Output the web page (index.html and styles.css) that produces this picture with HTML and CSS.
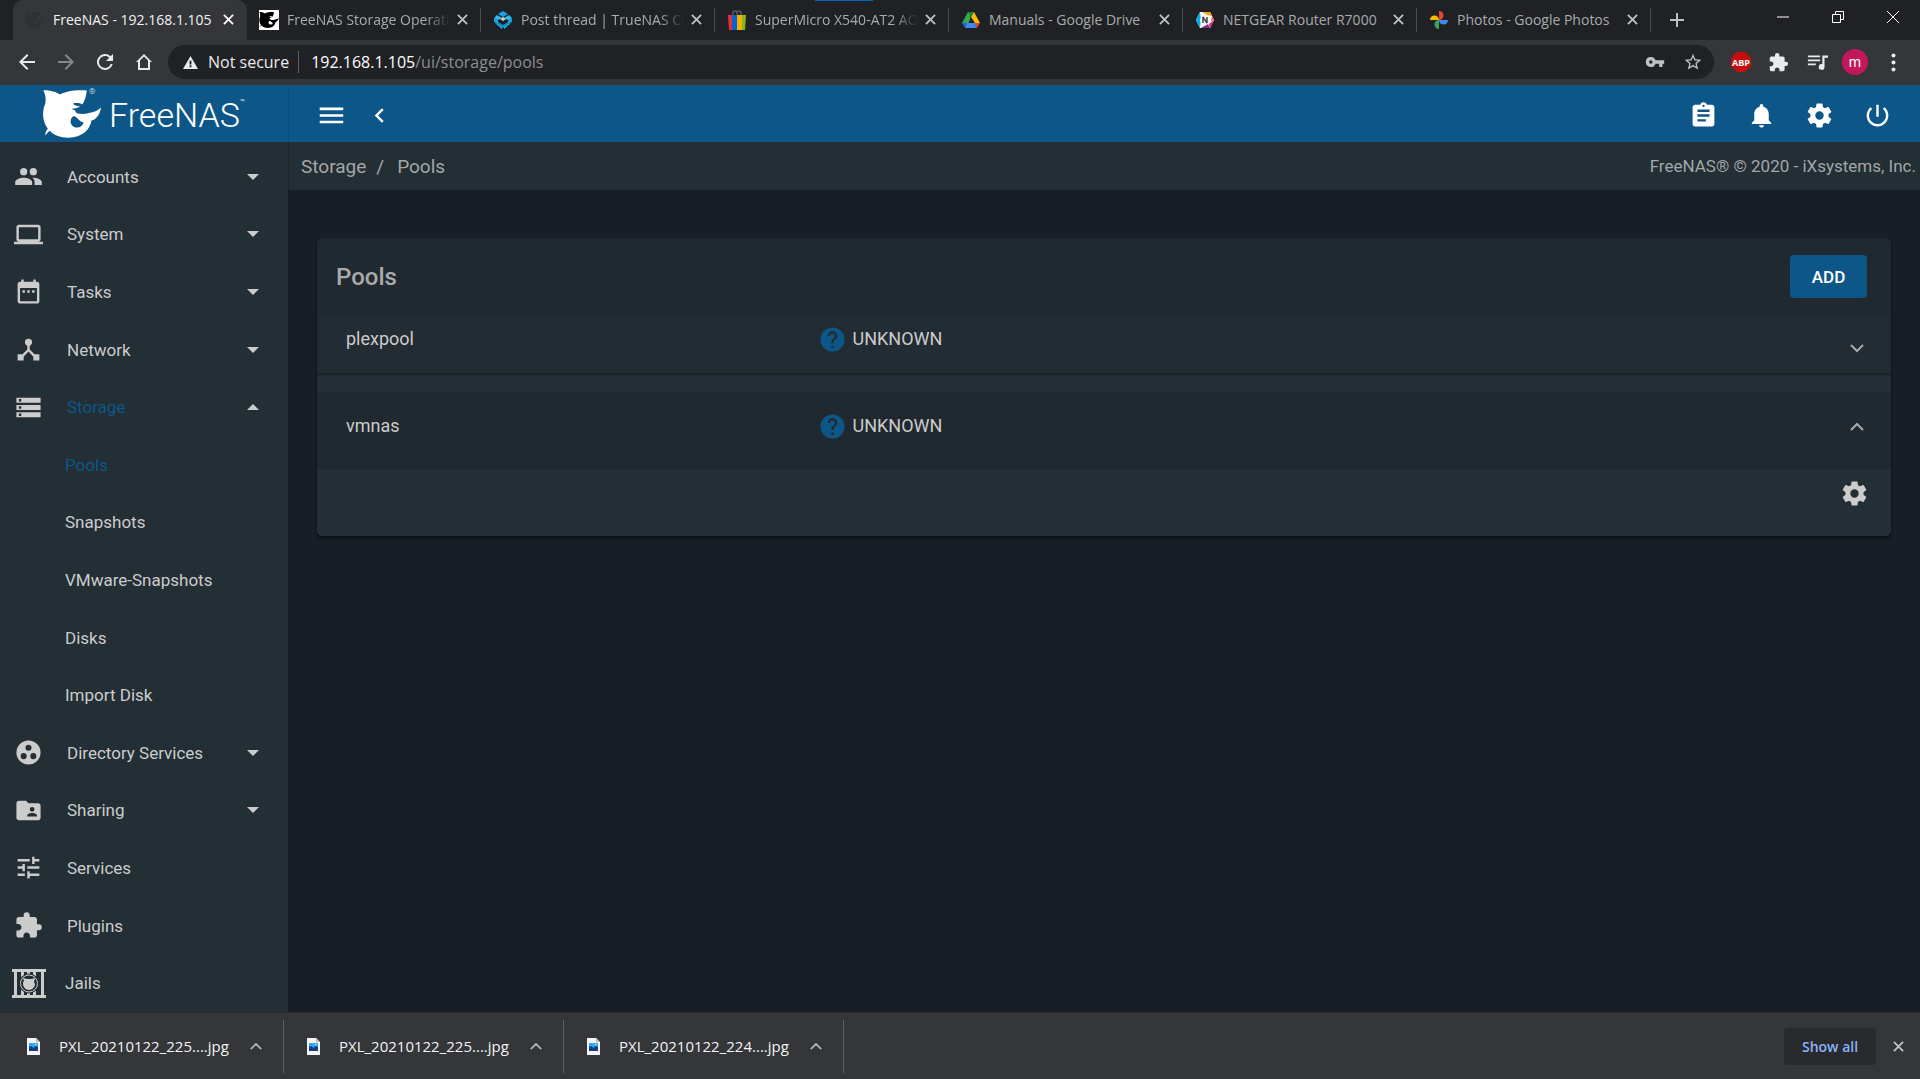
FILE: index.html
```html
<!DOCTYPE html>
<html lang="en">
<head>
    <meta charset="UTF-8">
    <title>FreeNAS - 192.168.1.105</title>
    <link rel="stylesheet" href="styles.css">
</head>
<body>
<svg class="sprite" aria-hidden="true">
    <symbol id="close" viewBox="0 0 12 12"><path d="M1 1l10 10M11 1L1 11" fill="none" stroke="currentColor" stroke-width="2"/></symbol>
    <symbol id="shark" viewBox="18 12 182 150"><path fill-rule="evenodd" d="M22 15C45 15 62 20 72 28C92 17 125 13 154 16C152 32 148 48 140 58C134 54 122 53 112 55C114 60 122 63 134 64C126 70 114 69 108 72L118 76C119 80 121 83 124 85C138 88 150 87 160 84C175 82 188 76 197 67C194 88 184 102 168 107C164 135 140 158 98 159C72 159 52 150 42 138C38 140 33 146 28 152C28 142 32 136 36 132C22 114 18 90 24 66C32 50 30 30 22 15ZM114 93C100 102 102 124 120 128C134 129 142 122 144 112C138 112 133 109 129 104C126 99 120 95 114 93Z"/></symbol>
    <symbol id="puzzle" viewBox="0 0 24 24"><path d="M20.5 11H19V7c0-1.1-.9-2-2-2h-4V3.500a2.500 2.500 0 0 0-5 0V5H4c-1.100 0-1.990.9-1.990 2v3.800H3.500c1.490 0 2.700 1.210 2.700 2.700s-1.210 2.700-2.700 2.700H2V20c0 1.100.9 2 2 2h3.800v-1.500c0-1.490 1.210-2.700 2.700-2.700s2.700 1.210 2.700 2.700V22H17c1.100 0 2-.9 2-2v-4h1.500a2.500 2.500 0 0 0 0-5z"/></symbol>
    <symbol id="gear" viewBox="0 0 24 24"><path d="M12 15.500A3.500 3.500 0 0 1 8.500 12 3.500 3.500 0 0 1 12 8.500a3.500 3.500 0 0 1 3.500 3.500 3.500 3.500 0 0 1-3.500 3.500m7.430-2.530c.04-.32.07-.64.07-.97s-.03-.66-.07-1l2.110-1.630c.19-.15.24-.42.12-.64l-2-3.460c-.12-.22-.39-.31-.61-.22l-2.490 1c-.52-.39-1.060-.73-1.690-.98l-.37-2.650A.506.506 0 0 0 14 2h-4c-.25 0-.46.18-.5.420l-.37 2.650c-.63.25-1.170.59-1.690.98l-2.490-1c-.22-.09-.49 0-.61.220l-2 3.460c-.13.220-.07.490.120.640L4.570 11c-.04.340-.07.670-.07 1s.03.650.07.970l-2.110 1.660c-.19.150-.25.420-.12.640l2 3.460c.12.220.390.300.610.220l2.490-1.010c.520.400 1.060.740 1.690.990l.370 2.650c.040.240.250.420.500.420h4c.250 0 .460-.180.500-.420l.370-2.650c.630-.260 1.170-.590 1.690-.990l2.490 1.010c.220.080.490 0 .610-.220l2-3.460c.120-.220.070-.490-.120-.640z"/></symbol>
    <symbol id="help" viewBox="0 0 24 24"><path d="M12 2a10 10 0 1 0 0 20 10 10 0 0 0 0-20zm1 17h-2v-2h2v2zm2.070-7.750l-.9.920C13.450 12.900 13 13.500 13 15h-2v-.5c0-1.100.450-2.100 1.170-2.830l1.240-1.260c.370-.360.590-.860.590-1.410a2 2 0 0 0-4 0H8a4 4 0 1 1 8 0c0 .880-.360 1.680-.930 2.250z"/></symbol>
    <symbol id="caret-down" viewBox="0 0 12 6"><path d="M0 0h12L6 6z"/></symbol>
    <symbol id="caret-up" viewBox="0 0 12 6"><path d="M0 6h12L6 0z"/></symbol>
    <symbol id="chevron-down" viewBox="0 0 14 9"><path d="M1 1l6 6 6-6" fill="none" stroke="currentColor" stroke-width="2"/></symbol>
    <symbol id="chevron-up" viewBox="0 0 14 9"><path d="M1 8l6-6 6 6" fill="none" stroke="currentColor" stroke-width="2"/></symbol>
    <symbol id="image-file" viewBox="0 0 13 17">
        <path fill="#f4f4f4" d="M0 0h9l4 4v13H0z"/>
        <path fill="#b9bcc0" d="M9 0l4 4H9z"/>
        <path fill="#31a8ee" d="M2 5h9v8H2z"/>
        <path fill="#123f87" d="M2 13V9l2-1 3 2 1-2 3 1v4z"/>
        <path fill="#fff" d="M8 6h1v1H8z"/>
    </symbol>
</svg>

<header class="browser">
    <div class="tab-strip">
        <div class="tab active">
            <svg class="favicon faint"><use href="#shark"/></svg>
            <span class="tab-title">FreeNAS - 192.168.1.105</span>
            <button class="tab-close" aria-label="Close tab"><svg><use href="#close"/></svg></button>
        </div>
        <div class="tab">
            <svg class="favicon white-box"><use href="#shark"/></svg>
            <span class="tab-title fade">FreeNAS Storage Operati</span>
            <button class="tab-close" aria-label="Close tab"><svg><use href="#close"/></svg></button>
        </div>
        <div class="tab">
            <svg class="favicon" viewBox="0 0 20 20">
                <path fill="#1ba1e2" d="M10 1l5 3-5 3-5-3zM1 8l4 2v4l-4-2zM19 8l-4 2v4l4-2z"/>
                <path fill="#31beec" d="M4 5l5 3-4 2-4-2zM16 5l-5 3 4 2 4-2zM2 13l3 1 4 3v2zM18 13l-3 1-4 3v2z"/>
                <path fill="#0095d5" d="M5 12l5 3 5-3v3l-5 3-5-3z"/>
                <path fill="#c7d0d5" d="M10 7l3 2-3 2-3-2z"/>
            </svg>
            <span class="tab-title fade">Post thread | TrueNAS Co</span>
            <button class="tab-close" aria-label="Close tab"><svg><use href="#close"/></svg></button>
        </div>
        <div class="tab">
            <svg class="favicon" viewBox="0 0 20 20">
                <path fill="none" stroke="#55585c" stroke-width="1.500" d="M6 7V3q0-2 2-2t2 2v4M10 7V3q0-2 2-2t2 2v4"/>
                <path fill="#e53238" d="M1 5h5v15H2z"/><path fill="#0064d2" d="M5 5h5v15H5z"/>
                <path fill="#f5af02" d="M10 5h5v15h-5z"/><path fill="#86b817" d="M15 5h4l-1 15h-3z"/>
            </svg>
            <span class="tab-title fade">SuperMicro X540-AT2 AO</span>
            <button class="tab-close" aria-label="Close tab"><svg><use href="#close"/></svg></button>
        </div>
        <div class="tab">
            <svg class="favicon" viewBox="0 0 20 20">
                <path fill="#34a853" d="M7 2h3l-1 8-4 7-4-4z"/><path fill="#188038" d="M7 2h6l-3 5z"/>
                <path fill="#fbbc04" d="M13 2l6 11h-5l-4-6z"/><path fill="#4285f4" d="M6 13h8l2 5H4z"/>
                <path fill="#ea4335" d="M14 13h5l-3 5z"/><path fill="#1967d2" d="M1 13h5l-2 5z"/>
            </svg>
            <span class="tab-title">Manuals - Google Drive</span>
            <button class="tab-close" aria-label="Close tab"><svg><use href="#close"/></svg></button>
        </div>
        <div class="tab">
            <svg class="favicon" viewBox="0 0 20 20">
                <path fill="#fff" d="M5 2h10l4 8-4 8H5l-4-8z"/>
                <path fill="#00aeef" d="M5 2L1 10l4 8 1-8z"/><path fill="#f9a11b" d="M7 2h8l2 4-5-1z"/>
                <path fill="#f15a29" d="M17 6l2 4-3 1z"/><path fill="#e6186d" d="M19 10l-4 8-1-4z"/><path fill="#7b2d8e" d="M15 18H6l7-4z"/>
                <circle cx="10" cy="10" r="5" fill="#f7f7f7"/>
                <path fill="none" stroke="#444" stroke-width="1.500" d="M8 13V7l4 6V7" stroke-linejoin="bevel"/>
            </svg>
            <span class="tab-title">NETGEAR Router R7000</span>
            <button class="tab-close" aria-label="Close tab"><svg><use href="#close"/></svg></button>
        </div>
        <div class="tab">
            <svg class="favicon" viewBox="0 0 20 20">
                <path fill="#ea4335" d="M10 1a4.500 4.500 0 0 1 0 9z"/><path fill="#4285f4" d="M19 10a4.500 4.500 0 0 1-9 0z"/>
                <path fill="#34a853" d="M10 19a4.500 4.500 0 0 1 0-9z"/><path fill="#fbbc04" d="M1 10a4.500 4.500 0 0 1 9 0z"/>
            </svg>
            <span class="tab-title">Photos - Google Photos</span>
            <button class="tab-close" aria-label="Close tab"><svg><use href="#close"/></svg></button>
        </div>
        <button class="new-tab" aria-label="New tab"><svg viewBox="0 0 14 14"><path d="M7 0v14M0 7h14"/></svg></button>
        <div class="window-buttons">
            <button aria-label="Minimize"><svg viewBox="0 0 14 14"><path d="M1 7h12"/></svg></button>
            <button aria-label="Restore"><svg viewBox="0 0 14 14"><path d="M1.500 4.500h8v8h-8zM4.500 4V1.500h8v8H10"/></svg></button>
            <button aria-label="Close"><svg viewBox="0 0 14 14"><path d="M1 1l12 12M13 1L1 13"/></svg></button>
        </div>
        <span class="window-accent"></span>
    </div>

    <div class="toolbar">
        <div class="nav-buttons">
            <button aria-label="Back"><svg viewBox="0 0 24 24"><path d="M20 11H7.800l5.600-5.600L12 4l-8 8 8 8 1.400-1.400L7.800 13H20z"/></svg></button>
            <button aria-label="Forward" class="dim"><svg viewBox="0 0 24 24"><path d="M12 4l-1.400 1.400 5.600 5.600H4v2h12.200l-5.600 5.600L12 20l8-8z"/></svg></button>
            <button aria-label="Reload"><svg viewBox="0 0 24 24"><path d="M17.650 6.350A8 8 0 1 0 19.730 14h-2.080A6 6 0 1 1 12 6c1.660 0 3.140.690 4.220 1.780L13 11h7V4z"/></svg></button>
            <button aria-label="Home"><svg viewBox="0 0 24 24"><path d="M12 4l8 8h-2v8H6v-8H4zM8 10.500V18h8v-7.500l-4-4z" fill-rule="evenodd"/></svg></button>
        </div>
        <div class="omnibox">
            <svg class="warning" viewBox="0 0 16 16"><path fill-rule="evenodd" d="M8 1l8 14H0zM7 6v4h2V6zM7 11v2h2v-2z"/></svg>
            <span class="secure">Not secure</span>
            <span class="url"><b>192.168.1.105</b>/ui/storage/pools</span>
            <button aria-label="Passwords"><svg viewBox="0 0 24 24"><path d="M12.650 10A6 6 0 0 0 1 12a6 6 0 0 0 11.650 2H17v4h4v-4h2v-4H12.650zM7 14a2 2 0 1 1 0-4 2 2 0 0 1 0 4z"/></svg></button>
            <button aria-label="Bookmark"><svg viewBox="0 0 24 24"><path d="M22 9.240l-7.190-.620L12 2 9.190 8.630 2 9.240l5.460 4.730L5.820 21 12 17.270 18.180 21l-1.630-7.030L22 9.240zM12 15.400l-3.760 2.270 1-4.280-3.320-2.880 4.380-.380L12 6.100l1.710 4.040 4.380.380-3.320 2.880 1 4.280L12 15.400z"/></svg></button>
        </div>
        <div class="extensions">
            <button class="abp">ABP</button>
            <button aria-label="Extensions"><svg><use href="#puzzle"/></svg></button>
            <button aria-label="Media"><svg viewBox="0 0 24 24"><path d="M1 4h14v2H1zM1 8.500h14v2H1zM1 13h9v2H1zM17 4h7v2.500h-4V17a3.300 3.300 0 1 1-2.500-3.200V4z"/></svg></button>
            <button class="avatar">m</button>
            <button aria-label="Menu"><svg viewBox="0 0 24 24"><circle cx="12" cy="4" r="2.300"/><circle cx="12" cy="12" r="2.300"/><circle cx="12" cy="20" r="2.300"/></svg></button>
        </div>
    </div>
</header>

<div class="app">
    <aside class="sidebar">
        <a class="logo" href="#">
            <svg><use href="#shark"/></svg><sup class="reg">®</sup>
            <span>FreeNAS</span><sup>™</sup>
        </a>
        <nav class="menu">
            <button class="menu-item">
                <svg class="icon" viewBox="0 0 24 24"><path d="M16 11a3 3 0 1 0 0-6 3 3 0 0 0 0 6zm-8 0a3 3 0 1 0 0-6 3 3 0 0 0 0 6zm0 2c-2.330 0-7 1.170-7 3.500V19h14v-2.500C15 14.170 10.330 13 8 13zm8 0c-.29 0-.62.020-.97.050 1.160.840 1.970 1.970 1.970 3.450V19h6v-2.500c0-2.330-4.670-3.500-7-3.500z"/></svg>
                <span>Accounts</span><svg class="caret"><use href="#caret-down"/></svg>
            </button>
            <button class="menu-item">
                <svg class="icon" viewBox="0 0 24 24"><path d="M20 18c1.100 0 2-.9 2-2V6c0-1.100-.9-2-2-2H4c-1.100 0-2 .9-2 2v10c0 1.100.9 2 2 2H0v2h24v-2h-4zM4 6h16v10H4V6z"/></svg>
                <span>System</span><svg class="caret"><use href="#caret-down"/></svg>
            </button>
            <button class="menu-item">
                <svg class="icon" viewBox="0 0 24 24"><path d="M9 11H7v2h2v-2zm4 0h-2v2h2v-2zm4 0h-2v2h2v-2zm2-7h-1V2h-2v2H8V2H6v2H5c-1.110 0-2 .9-2 2v14a2 2 0 0 0 2 2h14c1.100 0 2-.9 2-2V6c0-1.100-.9-2-2-2zm0 16H5V9h14v11z"/></svg>
                <span>Tasks</span><svg class="caret"><use href="#caret-down"/></svg>
            </button>
            <button class="menu-item">
                <svg class="icon" viewBox="0 0 24 24"><path d="M17 16l-4-4V8.820C14.160 8.400 15 7.300 15 6a3 3 0 0 0-6 0c0 1.300.840 2.400 2 2.820V12l-4 4H3v5h5v-3.050l4-4.200 4 4.200V21h5v-5h-4z"/></svg>
                <span>Network</span><svg class="caret"><use href="#caret-down"/></svg>
            </button>
            <button class="menu-item current">
                <svg class="icon" viewBox="0 0 24 24"><path d="M2 20h20v-4H2v4zm2-3h2v2H4v-2zM2 4v4h20V4H2zm4 3H4V5h2v2zm-4 7h20v-4H2v4zm2-3h2v2H4v-2z"/></svg>
                <span>Storage</span><svg class="caret"><use href="#caret-up"/></svg>
            </button>
            <a class="menu-item sub current" href="#">Pools</a>
            <a class="menu-item sub" href="#">Snapshots</a>
            <a class="menu-item sub" href="#">VMware-Snapshots</a>
            <a class="menu-item sub" href="#">Disks</a>
            <a class="menu-item sub" href="#">Import Disk</a>
            <button class="menu-item">
                <svg class="icon" viewBox="0 0 24 24"><path fill-rule="evenodd" d="M12 2a10 10 0 1 0 0 20 10 10 0 0 0 0-20zM8 17.500a2.500 2.500 0 1 1 0-5 2.500 2.500 0 0 1 0 5zM9.500 8a2.500 2.500 0 1 1 5 0 2.500 2.500 0 0 1-5 0zm6.500 9.500a2.500 2.500 0 1 1 0-5 2.500 2.500 0 0 1 0 5z"/></svg>
                <span>Directory Services</span><svg class="caret"><use href="#caret-down"/></svg>
            </button>
            <button class="menu-item">
                <svg class="icon" viewBox="0 0 24 24"><path d="M20 6h-8l-2-2H4c-1.100 0-1.990.9-1.990 2L2 18c0 1.100.9 2 2 2h16c1.100 0 2-.9 2-2V8c0-1.100-.9-2-2-2zm-5 3a2 2 0 1 1 0 4 2 2 0 0 1 0-4zm4 8h-8v-1c0-1.330 2.670-2 4-2s4 .670 4 2v1z"/></svg>
                <span>Sharing</span><svg class="caret"><use href="#caret-down"/></svg>
            </button>
            <a class="menu-item" href="#">
                <svg class="icon" viewBox="0 0 24 24"><path d="M3 17v2h6v-2H3zM3 5v2h10V5H3zm10 16v-2h8v-2h-8v-2h-2v6h2zM7 9v2H3v2h4v2h2V9H7zm14 4v-2H11v2h10zm-6-4h2V7h4V5h-4V3h-2v6z"/></svg>
                <span>Services</span>
            </a>
            <a class="menu-item" href="#">
                <svg class="icon"><use href="#puzzle"/></svg>
                <span>Plugins</span>
            </a>
            <a class="menu-item jails" href="#">
                <svg class="icon wide" viewBox="0 0 34 29">
                    <path d="M0 0h34v3H0zM0 26h34v3H0zM2 3h3v23H2zM9 3h3v23H9zM15 3h3v23h-3zM21 3h3v23h-3zM29 3h3v23h-3z"/>
                    <circle cx="17" cy="14.500" r="10" fill="#232e35"/>
                    <circle cx="17" cy="14.500" r="8.500" fill="none" stroke="currentColor"/>
                    <path d="M11 9l4 1h4l4-1-1 4 1 2c0 3-3 6-6 6s-6-3-6-6c0-1 0-2 1-3z"/>
                </svg>
                <span>Jails</span>
            </a>
        </nav>
    </aside>

    <div class="content">
        <div class="topbar">
            <button aria-label="Toggle menu"><svg viewBox="0 0 24 24"><path d="M3 18h18v-2H3v2zm0-5h18v-2H3v2zm0-7v2h18V6H3z" transform="translate(-1 -1) scale(1.080)"/></svg></button>
            <button aria-label="Collapse menu"><svg viewBox="0 0 24 24"><path d="M15.410 7.410L14 6l-6 6 6 6 1.410-1.410L10.830 12z"/></svg></button>
            <div class="topbar-actions">
                <button aria-label="Task manager"><svg viewBox="0 0 24 24"><path fill-rule="evenodd" d="M19 3h-4.180a3 3 0 0 0-5.640 0H5c-1.100 0-2 .9-2 2v14c0 1.100.9 2 2 2h14c1.100 0 2-.9 2-2V5c0-1.100-.9-2-2-2zm-7 0a1 1 0 1 1 0 2 1 1 0 0 1 0-2zm2 14H7v-2h7v2zm3-4H7v-2h10v2zm0-4H7V7h10v2z"/></svg></button>
                <button aria-label="Notifications"><svg viewBox="0 0 24 24"><path d="M12 22c1.100 0 2-.9 2-2h-4a2 2 0 0 0 2 2zm6-6v-5c0-3.070-1.640-5.640-4.500-6.320V4a1.500 1.500 0 0 0-3 0v.680C7.630 5.360 6 7.920 6 11v5l-2 2v1h16v-1l-2-2z"/></svg></button>
                <button aria-label="Settings"><svg><use href="#gear"/></svg></button>
                <button aria-label="Power"><svg viewBox="0 0 24 24"><path d="M13 3h-2v10h2V3zm4.830 2.170l-1.420 1.420A6.920 6.920 0 0 1 19 12a7 7 0 1 1-11.420-5.420L6.170 5.170A9 9 0 1 0 21 12a8.940 8.940 0 0 0-3.170-6.830z"/></svg></button>
            </div>
        </div>
        <div class="breadcrumb">
            <a href="#">Storage</a><span class="slash">/</span><a href="#">Pools</a>
            <span class="copyright">FreeNAS® © 2020 - iXsystems, Inc.</span>
        </div>
        <main>
            <section class="card">
                <div class="card-header">
                    <h1>Pools</h1>
                    <button class="add">ADD</button>
                </div>
                <div class="pool closed">
                    <span class="pool-name">plexpool</span>
                    <span class="status"><svg><use href="#help"/></svg>UNKNOWN</span>
                    <button aria-label="Expand plexpool"><svg><use href="#chevron-down"/></svg></button>
                </div>
                <div class="pool open">
                    <span class="pool-name">vmnas</span>
                    <span class="status"><svg><use href="#help"/></svg>UNKNOWN</span>
                    <button aria-label="Collapse vmnas"><svg><use href="#chevron-up"/></svg></button>
                </div>
                <div class="pool-body">
                    <button aria-label="Pool operations"><svg><use href="#gear"/></svg></button>
                </div>
            </section>
        </main>
    </div>
</div>

<footer class="downloads">
    <div class="download">
        <svg class="file"><use href="#image-file"/></svg>
        <span>PXL_20210122_225....jpg</span>
        <button aria-label="Options"><svg><use href="#chevron-up"/></svg></button>
    </div>
    <div class="download">
        <svg class="file"><use href="#image-file"/></svg>
        <span>PXL_20210122_225....jpg</span>
        <button aria-label="Options"><svg><use href="#chevron-up"/></svg></button>
    </div>
    <div class="download">
        <svg class="file"><use href="#image-file"/></svg>
        <span>PXL_20210122_224....jpg</span>
        <button aria-label="Options"><svg><use href="#chevron-up"/></svg></button>
    </div>
    <button class="show-all">Show all</button>
    <button class="close-bar" aria-label="Close downloads"><svg><use href="#close"/></svg></button>
</footer>
</body>
</html>
```
FILE: styles.css
```css
* {
    box-sizing: border-box;
}

html, body {
    margin: 0;
    height: 100%;
}

body {
    display: flex;
    flex-direction: column;
    overflow: hidden;
    background: #171e26;
    color: #cccccc;
    font-family: Roboto, sans-serif;
    font-size: 17px;
}

button {
    display: flex;
    align-items: center;
    justify-content: center;
    flex-shrink: 0;
    margin: 0;
    padding: 0;
    border: none;
    background: none;
    color: inherit;
    font: inherit;
}

a {
    color: inherit;
    text-decoration: none;
}

svg {
    display: block;
    flex-shrink: 0;
    fill: currentColor;
}

.sprite {
    position: absolute;
    width: 0;
    height: 0;
}

/* browser */
.browser, .downloads {
    font-family: "Open Sans", sans-serif;
    flex-shrink: 0;
}

.tab-strip {
    position: relative;
    display: flex;
    height: 40px;
    padding-left: 13px;
    background: #202124;
    color: #a7abb0;
    font-size: 14px;
}

.tab {
    display: flex;
    align-items: center;
    width: 234px;
    padding: 0 7px 1px 12px;
    position: relative;
}

.tab:not(.active)::after {
    content: "";
    position: absolute;
    right: 0;
    top: 8px;
    width: 1px;
    height: 24px;
    background: #4b4d51;
}

.tab.active {
    border-radius: 10px 10px 0 0;
    background: #35363a;
    color: #f1f3f4;
}

.favicon {
    width: 20px;
    height: 20px;
    margin-right: 8px;
}

.favicon.faint {
    color: #303134;
}

.favicon.white-box {
    background: #ffffff;
    color: #000000;
}

.tab-title {
    flex: 1;
    overflow: hidden;
    white-space: nowrap;
}

.tab-title.fade {
    -webkit-mask-image: linear-gradient(to right, #000 85%, transparent);
    mask-image: linear-gradient(to right, #000 85%, transparent);
}

.tab-close {
    width: 24px;
    height: 24px;
    color: #bdc1c6;
}

.active .tab-close {
    color: #ffffff;
}

.tab-close svg {
    width: 11px;
    height: 11px;
}

.new-tab {
    width: 52px;
    color: #bdc1c6;
}

.new-tab svg {
    width: 14px;
    height: 14px;
    stroke: currentColor;
    stroke-width: 2;
}

.window-buttons {
    display: flex;
    margin-left: auto;
    color: #ffffff;
}

.window-buttons button {
    width: 55px;
    height: 34px;
}

.window-buttons svg {
    width: 14px;
    height: 14px;
    fill: none;
    stroke: currentColor;
}

.window-accent {
    position: absolute;
    top: 0;
    left: 815px;
    width: 58px;
    height: 1px;
    background: #0067c0;
}

.toolbar {
    display: flex;
    align-items: center;
    height: 45px;
    padding: 0 13px 1px 7px;
    background: #35363a;
    color: #e8eaed;
}

.nav-buttons {
    display: flex;
    width: 161px;
}

.nav-buttons button {
    width: 39px;
    height: 34px;
}

.nav-buttons svg {
    width: 24px;
    height: 24px;
}

.dim {
    color: #85878a;
}

.omnibox {
    display: flex;
    flex: 1;
    align-items: center;
    height: 34px;
    padding: 0 2px 0 15px;
    border-radius: 17px;
    background: #202124;
    font-size: 16px;
}

.omnibox button {
    width: 38px;
    color: #bdc1c6;
}

.omnibox button svg {
    width: 20px;
    height: 20px;
}

.warning {
    width: 15px;
    height: 15px;
    margin-right: 10px;
}

.secure {
    padding-right: 9px;
    border-right: 1px solid #5f6368;
}

.url {
    flex: 1;
    padding-left: 12px;
    color: #8b8e92;
}

.url b {
    color: #ffffff;
    font-weight: normal;
}

.extensions {
    display: flex;
    align-items: center;
    gap: 11px;
    padding-left: 14px;
}

.extensions button {
    width: 28px;
    height: 28px;
}

.extensions svg {
    width: 21px;
    height: 21px;
}

.extensions .abp {
    width: 20px;
    height: 20px;
    margin: 0 2px 0 3px;
    background: #c70d0d;
    clip-path: polygon(30% 0, 70% 0, 100% 30%, 100% 70%, 70% 100%, 30% 100%, 0 70%, 0 30%);
    color: #ffffff;
    font-size: 9px;
    font-weight: bold;
}

.extensions .avatar {
    width: 26px;
    height: 26px;
    border-radius: 50%;
    background: #c2185b;
    color: #ffffff;
    font-family: Roboto, sans-serif;
    font-size: 14px;
}

/* app */
.app {
    display: flex;
    flex: 1;
    min-height: 0;
}

.sidebar {
    display: flex;
    flex-direction: column;
    width: 288px;
    flex-shrink: 0;
    background: #232e35;
}

.logo {
    display: flex;
    align-items: center;
    height: 57px;
    flex-shrink: 0;
    padding-left: 42px;
    background: #0d5788;
    color: #ffffff;
    font-size: 34px;
    font-weight: 300;
}

.logo svg {
    width: 60px;
    height: 50px;
}

.logo span {
    padding-top: 3px;
}

.logo sup {
    align-self: flex-start;
    padding-top: 14px;
    font-size: 8px;
    line-height: 8px;
}

.logo .reg {
    width: 7px;
    margin-left: -13px;
    margin-right: 13px;
    padding-top: 3px;
}

.menu {
    display: flex;
    flex-direction: column;
    flex: 1;
    padding-top: 6px;
}

.menu-item {
    display: flex;
    flex: 1;
    align-items: center;
    justify-content: flex-start;
    padding: 0 29px 0 14px;
}

.menu-item.sub {
    padding-left: 65px;
}

.menu-item.current {
    color: #0d5788;
}

.icon {
    width: 29px;
    height: 29px;
    margin-right: 24px;
    color: #cccccc;
}

.menu-item.jails {
    padding-left: 12px;
}

.icon.wide {
    width: 34px;
    margin-right: 19px;
}

.caret {
    width: 12px;
    height: 6px;
    margin-left: auto;
    color: #cccccc;
}

.content {
    display: flex;
    flex-direction: column;
    flex: 1;
    min-width: 0;
}

.topbar {
    display: flex;
    align-items: center;
    height: 57px;
    flex-shrink: 0;
    padding: 3px 19px 0 18px;
    border-left: 1px solid #0c4f7c;
    background: #0d5788;
    color: #ffffff;
}

.topbar button {
    width: 48px;
    height: 48px;
}

.topbar svg {
    width: 29px;
    height: 29px;
}

.topbar-actions {
    display: flex;
    gap: 10px;
    margin-left: auto;
}

.breadcrumb {
    display: flex;
    align-items: center;
    height: 48px;
    flex-shrink: 0;
    padding: 0 4px 0 12px;
    border-left: 1px solid #1e262d;
    background: #232e35;
    color: #a4a6a8;
    font-size: 19px;
}

.slash {
    margin: 0 13px 0 10px;
}

.copyright {
    margin-left: auto;
    font-size: 17px;
}

main {
    flex: 1;
    padding: 48px 29px 0;
}

.card {
    overflow: hidden;
    border-radius: 5px;
    background: #232e35;
    box-shadow: 0 2px 3px rgba(0, 0, 0, .5);
}

.card-header {
    display: flex;
    align-items: center;
    justify-content: space-between;
    height: 77px;
    padding: 0 24px 0 19px;
    background: #202930;
}

h1 {
    margin: 0;
    color: #aaaaaa;
    font-size: 24px;
    font-weight: 500;
}

.add {
    width: 77px;
    height: 43px;
    border-radius: 4px;
    background: #0d5788;
    color: #ffffff;
    font-weight: 500;
}

.pool {
    display: grid;
    grid-template-columns: 31% 1fr auto;
    align-items: center;
    padding: 0 24px 0 29px;
    font-size: 18px;
    line-height: 24px;
}

.pool.closed {
    align-items: start;
    height: 58px;
    padding-top: 12px;
    background: #232b33;
    box-shadow: 0 2px 2px rgba(0, 0, 0, .35);
}

.pool.closed button {
    margin-top: 9px;
}

.pool.open {
    height: 77px;
    margin-top: 19px;
    padding-bottom: 9px;
    background: #202930;
}

.pool button {
    width: 20px;
    height: 24px;
    color: #aaaaaa;
}

.pool button svg {
    width: 14px;
    height: 9px;
}

.status {
    display: flex;
    align-items: center;
    gap: 6px;
    height: 24px;
}

.status svg {
    width: 29px;
    height: 29px;
    color: #0d5788;
}

.pool-body {
    display: flex;
    justify-content: flex-end;
    padding: 10px 22px 28px;
}

.pool-body svg {
    width: 29px;
    height: 29px;
}

/* downloads */
.downloads {
    display: flex;
    align-items: center;
    height: 67px;
    padding: 0 10px 0 4px;
    border-top: 1px solid #28292c;
    background: #35363a;
    color: #f1f3f4;
    font-size: 15px;
}

.download {
    display: flex;
    align-items: center;
    width: 280px;
    height: 53px;
    padding: 0 13px 0 23px;
    border-right: 1px solid #606165;
}

.file {
    width: 13px;
    height: 17px;
    margin-right: 19px;
}

.download button {
    width: 28px;
    margin-left: auto;
    color: #bdc1c6;
}

.download button svg {
    width: 12px;
    height: 8px;
}

.show-all {
    width: 92px;
    height: 37px;
    margin-left: auto;
    border-radius: 4px;
    background: #292a2d;
    color: #8ab4f8;
    font-size: 14px;
    font-weight: 600;
}

.close-bar {
    width: 24px;
    height: 24px;
    margin-left: 10px;
    color: #bdc1c6;
}

.close-bar svg {
    width: 11px;
    height: 11px;
}
```
